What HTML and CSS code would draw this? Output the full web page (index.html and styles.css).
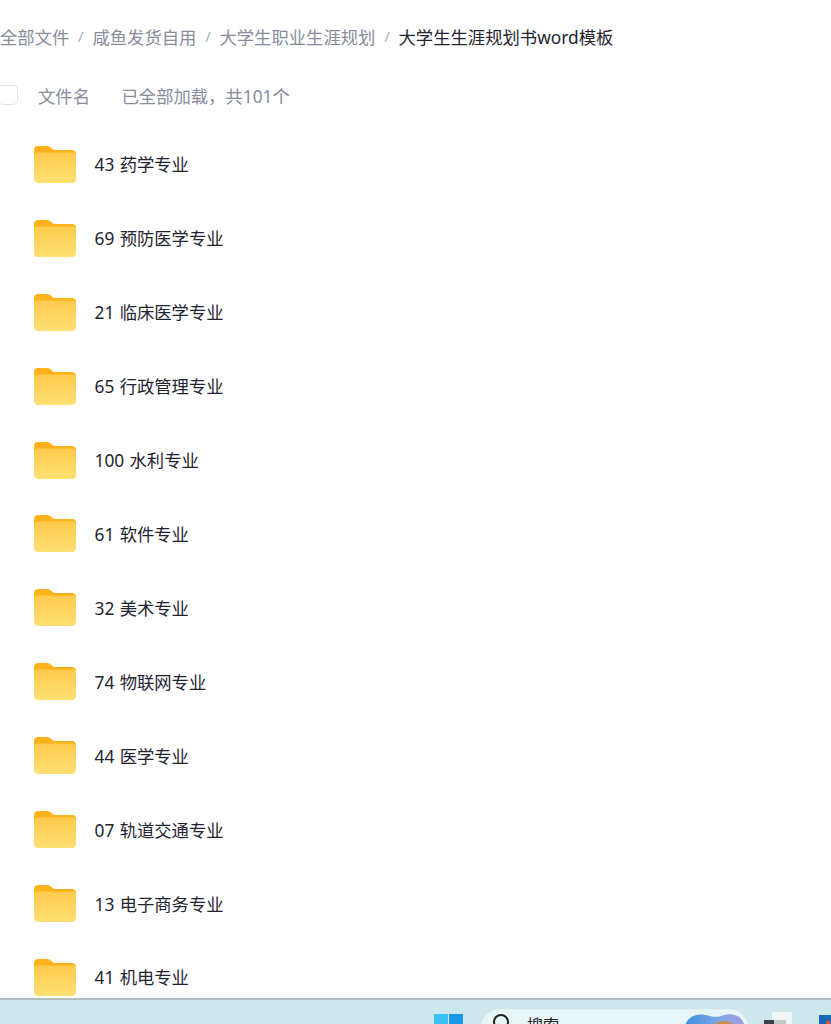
FILE: index.html
```html
<!DOCTYPE html>
<html lang="zh-CN">
<head>
    <meta charset="UTF-8">
    <title>全部文件</title>
    <link rel="stylesheet" href="styles.css">
</head>
<body>
    <div class="page">
        <div class="crumbs">
            <span>全部文件</span><i>/</i>
            <span>咸鱼发货自用</span><i>/</i>
            <span>大学生职业生涯规划</span><i>/</i>
            <span class="current">大学生生涯规划书word模板</span>
        </div>
        <div class="list-head">
            <span class="check"></span>
            <span class="col-name">文件名</span>
            <span class="col-count">已全部加载，共101个</span>
        </div>
        <div class="files">
            <div class="file"><svg class="folder" viewBox="0 0 43 38"><use href="#folder"/></svg><span>43 药学专业</span></div>
            <div class="file"><svg class="folder" viewBox="0 0 43 38"><use href="#folder"/></svg><span>69 预防医学专业</span></div>
            <div class="file"><svg class="folder" viewBox="0 0 43 38"><use href="#folder"/></svg><span>21 临床医学专业</span></div>
            <div class="file"><svg class="folder" viewBox="0 0 43 38"><use href="#folder"/></svg><span>65 行政管理专业</span></div>
            <div class="file"><svg class="folder" viewBox="0 0 43 38"><use href="#folder"/></svg><span>100 水利专业</span></div>
            <div class="file"><svg class="folder" viewBox="0 0 43 38"><use href="#folder"/></svg><span>61 软件专业</span></div>
            <div class="file"><svg class="folder" viewBox="0 0 43 38"><use href="#folder"/></svg><span>32 美术专业</span></div>
            <div class="file"><svg class="folder" viewBox="0 0 43 38"><use href="#folder"/></svg><span>74 物联网专业</span></div>
            <div class="file"><svg class="folder" viewBox="0 0 43 38"><use href="#folder"/></svg><span>44 医学专业</span></div>
            <div class="file"><svg class="folder" viewBox="0 0 43 38"><use href="#folder"/></svg><span>07 轨道交通专业</span></div>
            <div class="file"><svg class="folder" viewBox="0 0 43 38"><use href="#folder"/></svg><span>13 电子商务专业</span></div>
            <div class="file"><svg class="folder" viewBox="0 0 43 38"><use href="#folder"/></svg><span>41 机电专业</span></div>
        </div>
    </div>

    <div class="taskbar">
        <svg class="win" viewBox="0 0 29 12">
            <rect x="0" y="0" width="14" height="12" fill="#3cc0f4"/>
            <rect x="15" y="0" width="14" height="12" fill="#1c97e8"/>
        </svg>
        <div class="search">
            <svg class="search-icon" viewBox="0 0 20 12"><circle cx="9" cy="9" r="7" fill="none" stroke="#222" stroke-width="2"/></svg>
            <span class="search-text">搜索</span>
            <svg class="search-pic" viewBox="0 0 60 14">
                <path d="M0 14C1 5 10 0 20 2C26 3 30 5 36 3C46 -1 57 1 60 14Z" fill="url(#picSky)"/>
                <path d="M28 14C32 6 44 6 52 14Z" fill="#c98a54"/>
            </svg>
        </div>
        <div class="tray-app">
            <span class="app-back"></span>
            <span class="app-front"></span>
            <span class="app-side"></span>
        </div>
        <div class="tray-store"><span class="store-dot"></span></div>
    </div>

    <svg class="defs" width="0" height="0">
        <defs>
            <linearGradient id="folderFront" x1="0" y1="0" x2="0" y2="1">
                <stop offset="0" stop-color="#ffca4c"/>
                <stop offset="1" stop-color="#ffe074"/>
            </linearGradient>
            <linearGradient id="picSky" x1="0" y1="0" x2="1" y2="0">
                <stop offset="0" stop-color="#3f8fe0"/>
                <stop offset=".6" stop-color="#7fa8e4"/>
                <stop offset="1" stop-color="#a99adf"/>
            </linearGradient>
            <symbol id="folder" viewBox="0 0 43 38">
                <path d="M0 4C0 1.500 1.500 0 4 0H13C15 0 16.500 .8 18 2.200C19 3.200 20 4 22 4H39C41.500 4 43 5.500 43 8V20H0Z" fill="#ffb219"/>
                <path d="M0 10C0 8 1.500 6.800 4 6.800H39C41.500 6.800 43 8 43 10V34C43 36.500 41.500 38 39 38H4C1.500 38 0 36.500 0 34Z" fill="url(#folderFront)"/>
            </symbol>
        </defs>
    </svg>
</body>
</html>
```
FILE: styles.css
```css
html, body {
    margin: 0;
    height: 100%;
    overflow: hidden;
}
body {
    display: flex;
    flex-direction: column;
    height: 1024px;
    background-color: #fff;
    font-family: "Noto Sans", "Noto Sans CJK SC", sans-serif;
}
.page {
    flex: 1;
    min-height: 0;
    overflow: hidden;
}
.crumbs {
    display: flex;
    align-items: center;
    height: 20px;
    margin-top: 26px;
    font-size: 17.33px;
    color: #878c9c;
    white-space: nowrap;
}
.crumbs i {
    width: 23.100px;
    text-align: center;
    font-style: normal;
    font-size: 15px;
    color: #a9adb8;
}
.crumbs .current {
    color: #1f2430;
}
.list-head {
    display: flex;
    align-items: center;
    height: 20px;
    margin-top: 39px;
    font-size: 17.33px;
    color: #878c9c;
}
.check {
    width: 20px;
    height: 20px;
    box-sizing: border-box;
    margin-left: -2px;
    border: 1px solid #e2e3ea;
    border-radius: 5px;
}
.col-name {
    margin-left: 20px;
}
.col-count {
    margin-left: 31.500px;
}
.files {
    margin-top: 22px;
}
.file {
    display: flex;
    align-items: center;
    height: 73.920px;
    padding-left: 34px;
    font-size: 17.33px;
    word-spacing: .8px;
    color: #1f2430;
}
.folder {
    width: 42px;
    height: 37px;
    margin-right: 18.500px;
    margin-top: 1px;
}
.taskbar {
    position: relative;
    display: flex;
    flex: none;
    height: 26px;
    box-sizing: border-box;
    overflow: hidden;
    border-top: 2px solid #b0bcc0;
    background-color: #cde7ec;
}
.win {
    flex: none;
    width: 29px;
    height: 12px;
    margin: 14px 0 0 434px;
}
.search {
    display: flex;
    flex: none;
    width: 269px;
    height: 40px;
    box-sizing: border-box;
    margin: 9px 0 0 17px;
    border: 1px solid #e4f1f3;
    border-radius: 20px;
    background-color: #e9f6f8;
}
.search-icon {
    flex: none;
    width: 20px;
    height: 12px;
    margin: 3px 0 0 11px;
}
.search-text {
    margin: 4px 0 0 15px;
    font-size: 16px;
    line-height: 22px;
    color: #222;
}
.search-pic {
    flex: none;
    width: 60px;
    height: 14px;
    margin: 3px 3px 0 auto;
}
.tray-app {
    position: relative;
    flex: none;
    width: 32px;
    margin-left: 15px;
}
.app-back {
    position: absolute;
    top: 12px;
    left: 8px;
    width: 20px;
    height: 20px;
    background-color: #f2f5f6;
}
.app-front {
    position: absolute;
    top: 20px;
    left: 0;
    width: 10px;
    height: 10px;
    background-color: #3a3f44;
}
.app-side {
    position: absolute;
    top: 20px;
    left: 10px;
    width: 12px;
    height: 10px;
    background-color: #c4c8ca;
}
.tray-store {
    position: relative;
    flex: none;
    width: 12px;
    height: 14px;
    margin: 15px 0 0 23px;
    background-color: #1467b8;
}
.store-dot {
    position: absolute;
    top: 6px;
    left: 7px;
    width: 4px;
    height: 4px;
    background-color: #e2552c;
}
.defs {
    position: absolute;
}
```
